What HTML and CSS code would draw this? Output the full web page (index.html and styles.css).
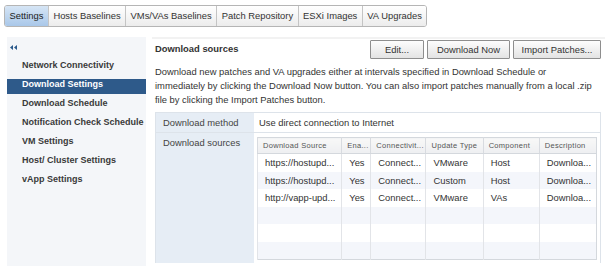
FILE: index.html
```html
<!DOCTYPE html>
<html lang="en">
<head>
    <meta charset="UTF-8">
    <title>Update Manager - Settings</title>
    <link rel="stylesheet" href="styles.css">
</head>
<body>
<div class="tabs">
    <div class="tab active">Settings</div>
    <div class="tab">Hosts Baselines</div>
    <div class="tab">VMs/VAs Baselines</div>
    <div class="tab">Patch Repository</div>
    <div class="tab">ESXi Images</div>
    <div class="tab">VA Upgrades</div>
</div>

<div class="main">
    <div class="sidebar">
        <div class="collapse">
            <svg width="7" height="5" viewBox="0 0 7 5"><path d="M3 0L0 2.5L3 5ZM7 0L4 2.5L7 5Z" fill="#2a5a8c"/></svg>
        </div>
        <ul class="nav">
            <li>Network Connectivity</li>
            <li class="selected">Download Settings</li>
            <li>Download Schedule</li>
            <li>Notification Check Schedule</li>
            <li>VM Settings</li>
            <li>Host/ Cluster Settings</li>
            <li>vApp Settings</li>
        </ul>
    </div>

    <div class="content">
        <div class="content-header">
            <h2>Download sources</h2>
            <div class="actions">
                <button class="btn btn-edit">Edit...</button>
                <button class="btn btn-now">Download Now</button>
                <button class="btn btn-import">Import Patches...</button>
            </div>
        </div>
        <p class="intro">Download new patches and VA upgrades either at intervals specified in Download Schedule or<br>
            immediately by clicking the Download Now button. You can also import patches manually from a local .zip<br>
            file by clicking the Import Patches button.</p>

        <div class="props">
            <div class="prop-label">Download method</div>
            <div class="prop-value">Use direct connection to Internet</div>
            <div class="prop-label">Download sources</div>
            <div class="prop-value">
                <table class="grid">
                    <thead>
                    <tr>
                        <th class="c-src">Download Source</th>
                        <th class="c-ena">Ena...</th>
                        <th class="c-conn">Connectivit...</th>
                        <th class="c-type">Update Type</th>
                        <th class="c-comp">Component</th>
                        <th class="c-desc">Description</th>
                    </tr>
                    </thead>
                    <tbody>
                    <tr><td>https://hostupd...</td><td>Yes</td><td>Connect...</td><td>VMware</td><td>Host</td><td>Downloa...</td></tr>
                    <tr><td>https://hostupd...</td><td>Yes</td><td>Connect...</td><td>Custom</td><td>Host</td><td>Downloa...</td></tr>
                    <tr><td>http://vapp-upd...</td><td>Yes</td><td>Connect...</td><td>VMware</td><td>VAs</td><td>Downloa...</td></tr>
                    <tr><td></td><td></td><td></td><td></td><td></td><td></td></tr>
                    <tr><td></td><td></td><td></td><td></td><td></td><td></td></tr>
                    <tr><td></td><td></td><td></td><td></td><td></td><td></td></tr>
                    </tbody>
                </table>
            </div>
        </div>
    </div>
</div>
</body>
</html>
```

FILE: styles.css
```css
body {
    margin: 0;
    font-family: 'Liberation Sans', Arial, sans-serif;
    font-size: 9.4px;
    color: #333;
    background: #fff;
    height: 266px;
    overflow: hidden;
}
.tabs {
    display: inline-flex;
    margin: 5px 0 0 4px;
    border: 1px solid #b5b5b5;
    border-radius: 3px;
    overflow: hidden;
}
.tab {
    height: 20px;
    line-height: 20px;
    padding: 0 4.5px;
    background: linear-gradient(#ffffff, #ececec);
    border-left: 1px solid #c4c4c4;
    color: #333;
}
.tab:first-child {
    border-left: none;
}
.tab.active {
    background: linear-gradient(#d6e5f5, #a9c7e9);
    color: #222;
}
.main {
    display: flex;
    margin-top: 10px;
}
.sidebar {
    flex-shrink: 0;
    margin-left: 7px;
    width: 139px;
    height: 229px;
    background: #f4f6f9;
}
.collapse {
    padding: 8px 0 0 3px;
    height: 11px;
    line-height: 0;
}
.nav {
    list-style: none;
    margin: 0;
    padding: 0;
}
.nav li {
    height: 19px;
    line-height: 19px;
    padding-left: 15px;
    font-size: 9px;
    font-weight: bold;
    color: #3a3a3a;
    white-space: nowrap;
}
.nav li.selected {
    background: #2e5a8a;
    color: #fff;
    height: 15px;
    line-height: 11px;
    margin-top: 4px;
}
.content {
    flex: 1;
    min-width: 0;
    margin-left: 6px;
    padding: 0 4px 0 3px;
    border-top: 2px solid #f2f2f2;
}
.content-header {
    display: flex;
    justify-content: space-between;
    align-items: center;
    height: 21px;
}
.content-header h2 {
    margin: -2px 0 0;
    font-size: 9.4px;
    font-weight: bold;
    color: #333;
}
.actions {
    display: flex;
    gap: 3px;
}
.btn {
    font-family: inherit;
    font-size: 9.4px;
    color: #333;
    height: 19px;
    padding: 0;
    border: 1px solid #8e8e8e;
    border-radius: 1px;
    background: linear-gradient(#fdfdfd, #e3e3e3);
}
.btn-edit {
    width: 54px;
}
.btn-now {
    width: 83px;
}
.btn-import {
    width: 88px;
}
.intro {
    margin: 5px 0 0;
    line-height: 14px;
    white-space: nowrap;
}
.props {
    display: grid;
    grid-template-columns: 98px 1fr;
    margin-top: 5px;
    border: 1px solid #dde3ea;
    height: 149px;
}
.prop-label {
    background: #e6edf5;
    padding: 4px 0 0 7px;
    color: #444;
}
.prop-value {
    padding: 4px 4px 0 5px;
    background: #fff;
}
.props > div:nth-child(1),
.props > div:nth-child(2) {
    height: 15px;
    border-bottom: 1px solid #dde3ea;
}
.props > div:nth-child(4) {
    padding: 4px 3px 3px 3px;
}
.grid {
    border-collapse: collapse;
    width: 340px;
    table-layout: fixed;
    border: 1px solid #d4d8dd;
}
.grid th {
    box-sizing: border-box;
    height: 16px;
    font-size: 7.5px;
    font-weight: normal;
    letter-spacing: 0.3px;
    color: #555;
    text-align: left;
    padding: 0 0 0 5px;
    background: linear-gradient(#f8f8f8, #eeeff1);
    border-left: 1px solid #d8dbe0;
    border-bottom: 1px solid #d4d8dd;
    white-space: nowrap;
    overflow: hidden;
}
.grid td {
    height: 17.5px;
    padding: 0 0 0 7px;
    border-left: 1px solid #e2e4e8;
    white-space: nowrap;
    overflow: hidden;
}
.grid tbody tr:nth-child(even) td {
    background: #f4f6fb;
}
.c-src { width: 84px; }
.c-ena { width: 29px; }
.c-conn { width: 55px; }
.c-type { width: 57px; }
.c-comp { width: 56px; }
.c-desc { width: 57px; }
```
